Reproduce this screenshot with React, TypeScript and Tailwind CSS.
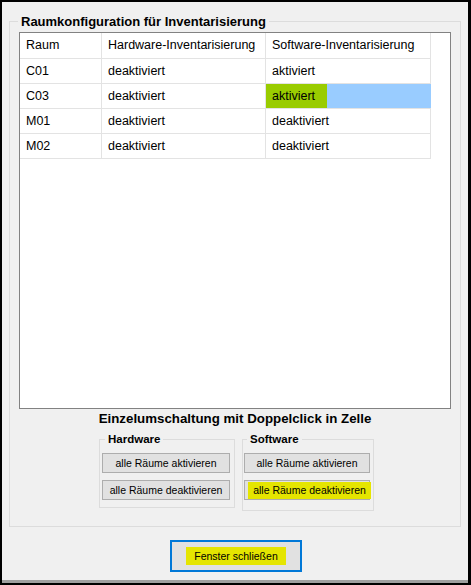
import React from 'react';

type Row = { raum: string; hw: string; sw: string; selected?: boolean };

const rows: Row[] = [
  { raum: 'C01', hw: 'deaktiviert', sw: 'aktiviert' },
  { raum: 'C03', hw: 'deaktiviert', sw: 'aktiviert', selected: true },
  { raum: 'M01', hw: 'deaktiviert', sw: 'deaktiviert' },
  { raum: 'M02', hw: 'deaktiviert', sw: 'deaktiviert' },
];

const cell = 'flex items-center pl-[6px] border-r border-b border-[#e3e3e3] whitespace-nowrap';

function WinButton({ label, width, highlight }: { label: string; width: string; highlight?: boolean }) {
  return (
    <button
      className={`${width} h-[20px] flex items-start bg-[#e1e1e1] border border-[#adadad] text-[10.5px] leading-[17px] text-black`}
    >
      {highlight ? (
        <span className="ml-[3px] -mr-[2px] mt-[1px] h-[17px] flex-1 bg-[#e5e500] text-center">{label}</span>
      ) : (
        <span className="flex-1 text-center leading-[18px]">{label}</span>
      )}
    </button>
  );
}

export default function App() {
  return (
    <div
      className="w-[471px] h-[585px] bg-black pt-[2px] pl-[2px] pr-[3px] pb-[2px] text-black"
      style={{ fontFamily: '"Liberation Sans", Arial, sans-serif' }}
    >
      <div className="h-full bg-[#f0f0f0] border-b-[3px] border-[#a0a0a0] flex flex-col">
        {/* main group */}
        <fieldset className="mx-[7px] mt-[12px] h-[513px] border border-[#dcdcdc] flex flex-col">
          <legend className="ml-[8px] px-[3px] text-[13px] leading-[15px] font-bold">
            Raumkonfiguration für Inventarisierung
          </legend>

          <div className="ml-[9px] mt-[3px] w-[432px] h-[377px] bg-white border border-[#828282]">
            <div className="grid grid-cols-[82px_164px_165px] text-[12.5px]">
              <div className={`${cell} h-[26px]`}>Raum</div>
              <div className={`${cell} h-[26px]`}>Hardware-Inventarisierung</div>
              <div className={`${cell} h-[26px]`}>Software-Inventarisierung</div>
              {rows.map((r) => (
                <React.Fragment key={r.raum}>
                  <div className={`${cell} h-[25px]`}>{r.raum}</div>
                  <div className={`${cell} h-[25px]`}>{r.hw}</div>
                  {r.selected ? (
                    <div className="h-[25px] flex items-stretch border-b border-[#e3e3e3] bg-[#99ccff]">
                      <span className="w-[61px] pl-[6px] flex items-center bg-[#99cc00]">{r.sw}</span>
                    </div>
                  ) : (
                    <div className={`${cell} h-[25px]`}>{r.sw}</div>
                  )}
                </React.Fragment>
              ))}
            </div>
          </div>

          <div className="mt-[2px] text-center text-[13.3px] leading-[16px] font-bold">
            Einzelumschaltung mit Doppelclick in Zelle
          </div>

          <div className="mt-[5px] ml-[89px] flex items-start gap-[7px]">
            <fieldset className="w-[136px] h-[76px] border border-[#dcdcdc] flex flex-col">
              <legend className="ml-[5px] px-[3px] text-[11.5px] leading-[14px] font-bold">Hardware</legend>
              <div className="ml-[2px] mt-[7px] flex flex-col gap-[7px]">
                <WinButton label="alle Räume aktivieren" width="w-[128px]" />
                <WinButton label="alle Räume deaktivieren" width="w-[128px]" />
              </div>
            </fieldset>
            <fieldset className="w-[132px] h-[79px] border border-[#dcdcdc] flex flex-col">
              <legend className="ml-[4px] px-[3px] text-[11.5px] leading-[14px] font-bold">Software</legend>
              <div className="ml-[1px] mt-[7px] flex flex-col gap-[7px]">
                <WinButton label="alle Räume aktivieren" width="w-[126px]" />
                <WinButton label="alle Räume deaktivieren" width="w-[126px]" highlight />
              </div>
            </fieldset>
          </div>
        </fieldset>

        <button className="mt-[13px] ml-[168px] w-[132px] h-[32px] border-2 border-[#0078d7] bg-[#e1e1e1] flex items-center justify-center">
          <span className="w-[100px] h-[18px] bg-[#e5e500] text-[10.5px] leading-[18px] text-center">
            Fenster schließen
          </span>
        </button>
      </div>
    </div>
  );
}
